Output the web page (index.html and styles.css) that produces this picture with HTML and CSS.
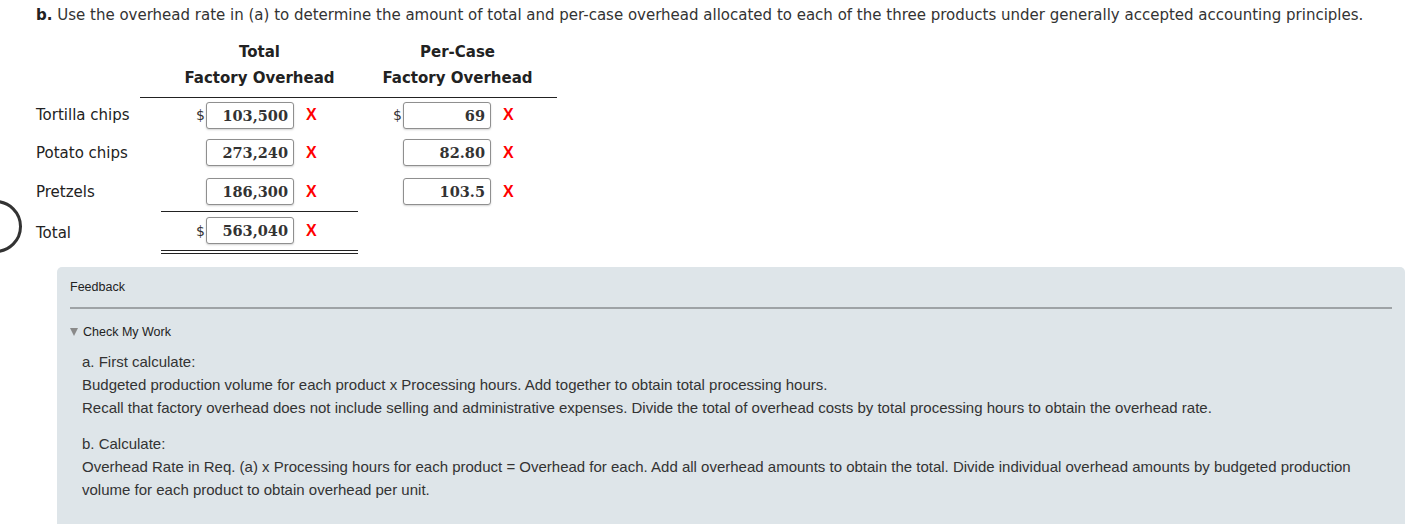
FILE: index.html
```html
<!DOCTYPE html>
<html>
<head>
<meta charset="utf-8">
<link rel="stylesheet" href="styles.css">
</head>
<body>
<div class="ring"></div>
<div class="page">
  <p class="question"><b>b.</b> Use the overhead rate in (a) to determine the amount of total and per-case overhead allocated to each of the three products under generally accepted accounting principles.</p>

  <div class="grid">
    <div class="hd hd-total"><span>Total</span><span>Factory Overhead</span></div>
    <div class="hd hd-per"><span>Per-Case</span><span>Factory Overhead</span></div>
    <div class="hd-line"></div>

    <div class="label r2">Tortilla chips</div>
    <div class="cell c-total r2"><span class="dollar">$</span><span class="box">103,500</span><span class="mark">X</span></div>
    <div class="cell c-per r2"><span class="dollar">$</span><span class="box">69</span><span class="mark">X</span></div>

    <div class="label r3">Potato chips</div>
    <div class="cell c-total r3"><span class="dollar"></span><span class="box">273,240</span><span class="mark">X</span></div>
    <div class="cell c-per r3"><span class="dollar"></span><span class="box">82.80</span><span class="mark">X</span></div>

    <div class="label r4">Pretzels</div>
    <div class="cell c-total r4"><span class="dollar"></span><span class="box">186,300</span><span class="mark">X</span></div>
    <div class="cell c-per r4"><span class="dollar"></span><span class="box">103.5</span><span class="mark">X</span></div>

    <div class="label r5">Total</div>
    <div class="cell c-total r5 total-cell"><span class="dollar">$</span><span class="box">563,040</span><span class="mark">X</span></div>
  </div>

  <div class="feedback">
    <div class="fb-title">Feedback</div>
    <div class="fb-check"><span class="tri"></span>Check My Work</div>
    <div class="fb-body">
      <p>a. First calculate:<br>Budgeted production volume for each product x Processing hours. Add together to obtain total processing hours.<br>Recall that factory overhead does not include selling and administrative expenses. Divide the total of overhead costs by total processing hours to obtain the overhead rate.</p>
      <p>b. Calculate:<br>Overhead Rate in Req. (a) x Processing hours for each product = Overhead for each. Add all overhead amounts to obtain the total. Divide individual overhead amounts by budgeted production volume for each product to obtain overhead per unit.</p>
    </div>
  </div>
</div>
</body>
</html>
```

FILE: styles.css
```css
html, body {
  margin: 0;
  padding: 0;
  background: #fff;
  overflow: hidden;
}
body {
  font-family: "DejaVu Sans", Verdana, sans-serif;
  color: #222;
}
.ring {
  position: absolute;
  left: -31px;
  top: 200px;
  width: 47px;
  height: 47px;
  border: 3px solid #333;
  border-radius: 50%;
}
.page {
  padding: 0 0 0 36px;
}
.question {
  margin: 0;
  padding-top: 6px;
  font-size: 15px;
  line-height: 18px;
  color: #333;
}
.question b {
  color: #222;
}
.grid {
  display: grid;
  grid-template-columns: 104px 21px 197px 199px;
  grid-template-rows: 63px 36px 39px 39px auto;
  margin-top: 10px;
  font-size: 15px;
}
.hd {
  display: flex;
  flex-direction: column;
  align-items: center;
  font-weight: bold;
  color: #222;
  line-height: 26px;
  padding-top: 5px;
}
.hd-total { grid-column: 3; grid-row: 1; }
.hd-per { grid-column: 4; grid-row: 1; }
.hd-line {
  grid-column: 2 / 5;
  grid-row: 1;
  align-self: end;
  border-bottom: 1px solid #222;
  margin-bottom: -1px;
}
.r2 { grid-row: 2; }
.r3 { grid-row: 3; }
.r4 { grid-row: 4; }
.r5 { grid-row: 5; }
.label {
  grid-column: 1;
  display: flex;
  align-items: center;
  color: #222;
}
.cell {
  display: flex;
  align-items: center;
}
.c-total { grid-column: 3; padding-left: 35px; }
.c-per { grid-column: 4; padding-left: 35px; }
.dollar {
  width: 10px;
  color: #333;
  font-size: 14px;
}
.box {
  box-sizing: border-box;
  width: 88px;
  height: 27px;
  border: 1px solid #8f8f8f;
  border-radius: 3px;
  box-shadow: 0 1px 2px rgba(0,0,0,0.18);
  background: #fff;
  font-family: "DejaVu Serif", Georgia, serif;
  font-weight: bold;
  font-size: 14.5px;
  color: #333;
  text-align: right;
  padding-right: 5px;
  line-height: 25px;
}
.mark {
  margin-left: 12px;
  font-family: "Liberation Sans", Arial, sans-serif;
  font-weight: bold;
  font-size: 16px;
  color: #f00;
}
.total-cell {
  border-top: 1px solid #222;
  border-bottom: 4px double #222;
  padding-top: 5px;
  padding-bottom: 6px;
}
.feedback {
  margin: 13px 4px 0 21px;
  background: #dee5e9;
  border-radius: 5px;
  padding: 12px 13px 30px 13px;
  font-family: "Liberation Sans", Arial, sans-serif;
  color: #222;
}
.fb-title {
  font-size: 12.5px;
  line-height: 16px;
  padding-bottom: 12px;
  border-bottom: 2px solid #9ea3a6;
}
.fb-check {
  margin-top: 15px;
  font-size: 12.5px;
  line-height: 16px;
  display: flex;
  align-items: center;
}
.tri {
  width: 0;
  height: 0;
  border-left: 4px solid transparent;
  border-right: 4px solid transparent;
  border-top: 8px solid #8a8a8a;
  margin-right: 5px;
}
.fb-body {
  padding-left: 12px;
  font-size: 15px;
  line-height: 23px;
  color: #333;
}
.fb-body p {
  margin: 10px 0 13px 0;
}
```
